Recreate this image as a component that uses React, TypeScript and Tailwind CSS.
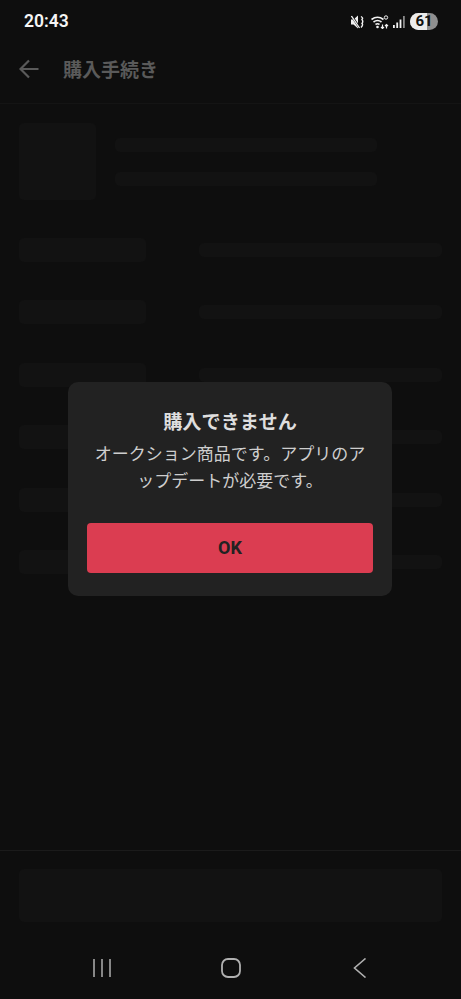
const jp = { fontFamily: '"Noto Sans CJK JP", Roboto, sans-serif' };

function StatusIcons() {
  return (
    <div className="flex items-center">
      {/* muted speaker */}
      <svg width="13" height="14" viewBox="0 0 13 14" className="mr-[7px]">
        <path d="M0 4.500h2.500l4.500-4v13l-4.500-4h-2.500z" fill="#f2f2f2" />
        <path d="M0.500 0.500l8.500 13" stroke="#0e0e0e" strokeWidth="2.200" />
        <path d="M0.500 1l8 12" stroke="#f2f2f2" strokeWidth="1.300" />
        <path d="M10 1.500q2.500 1.500 1 3q1.500 2 0 4q1.500 1.500-1 4" stroke="#f2f2f2" strokeWidth="1.400" fill="none" />
      </svg>
      {/* wifi */}
      <svg width="18" height="14" viewBox="0 0 18 14" className="mr-[4px]">
        <path d="M0.500 4.500q6-4.500 12 0M2.500 7q4-3 8 0M4.500 9.500q2-1.500 4 0" stroke="#f2f2f2" strokeWidth="1.600" fill="none" />
        <circle cx="6.500" cy="12" r="1.300" fill="#f2f2f2" />
        <path d="M11.500 9.500v4M10 12l1.500 1.500 1.500-1.500M15.500 13.500v-4M14 11l1.500-1.500 1.500 1.500" stroke="#f2f2f2" strokeWidth="1.200" fill="none" />
        <circle cx="15" cy="2.500" r="1.700" stroke="#f2f2f2" strokeWidth="1" fill="none" />
      </svg>
      {/* signal */}
      <svg width="12" height="12" viewBox="0 0 12 12" className="mr-[5px]">
        <rect x="0" y="9" width="1.800" height="3" fill="#f2f2f2" />
        <rect x="3.300" y="6.500" width="1.800" height="5.500" fill="#f2f2f2" />
        <rect x="6.600" y="3.500" width="1.800" height="8.500" fill="#f2f2f2" />
        <rect x="10" y="0" width="1.800" height="12" fill="#8a8a8a" />
      </svg>
      {/* battery */}
      <div className="relative flex h-[17px] w-[28px] items-center justify-center overflow-hidden rounded-full bg-[#8f8f8f]">
        <div className="absolute inset-y-0 left-0 w-[17px] bg-[#ececec]" />
        <span className="relative text-[15px] leading-none font-bold text-[#111]" style={{ fontFamily: "Roboto, sans-serif" }}>61</span>
      </div>
    </div>
  );
}

function Row() {
  return (
    <div className="flex h-[24px] items-center justify-between">
      <div className="h-[24px] w-[127px] rounded-[5px] bg-[#121212]" />
      <div className="h-[14px] w-[243px] rounded-[5px] bg-[#121212]" />
    </div>
  );
}

export default function App() {
  return (
    <div className="relative flex h-[999px] w-[461px] flex-col overflow-hidden bg-[#0e0e0e]" style={jp}>
      {/* Status bar */}
      <div className="flex h-[43px] items-center justify-between pr-[23px] pl-[24px]">
        <span className="pt-[1px] text-[17.500px] leading-none font-semibold text-[#f5f5f5]" style={{ fontFamily: "Roboto, sans-serif" }}>20:43</span>
        <StatusIcons />
      </div>

      {/* Header */}
      <div className="flex h-[61px] items-center border-b border-[#141414] pb-[9px] pl-[19px]">
        <svg width="20" height="20" viewBox="0 0 20 20" fill="none" stroke="#5a5a5a" strokeWidth="2.200">
          <path d="M19.500 10H1.500M10 1.500L1.500 10l8.500 8.500" />
        </svg>
        <span className="ml-[24px] text-[19px] leading-none font-bold text-[#5a5a5a]">購入手続き</span>
      </div>

      {/* Skeleton content */}
      <div className="flex flex-1 flex-col px-[19px] pt-[19px]">
        <div className="flex items-center">
          <div className="h-[77px] w-[77px] rounded-[5px] bg-[#121212]" />
          <div className="ml-[19px] flex flex-col gap-[20px]">
            <div className="h-[14px] w-[262px] rounded-[5px] bg-[#121212]" />
            <div className="h-[14px] w-[262px] rounded-[5px] bg-[#121212]" />
          </div>
        </div>
        <div className="mt-[38px] flex flex-col gap-[38.400px]">
          <Row />
          <Row />
          <Row />
          <Row />
          <Row />
          <Row />
        </div>
      </div>

      {/* Footer */}
      <div className="border-t border-[#1b1b1b] px-[19px] pt-[18px]">
        <div className="h-[53px] rounded-[5px] bg-[#121212]" />
      </div>

      {/* Nav bar */}
      <div className="flex h-[77px] items-center pt-[15px] pl-[92px]">
        <svg width="20" height="18" viewBox="0 0 20 18" stroke="#b0b0b0" strokeWidth="1.500">
          <path d="M2 0v18M10 0v18M18 0v18" />
        </svg>
        <svg width="20" height="20" viewBox="0 0 20 20" fill="none" stroke="#b0b0b0" strokeWidth="1.800" className="ml-[108.500px]">
          <rect x="1" y="1" width="18" height="18" rx="6" />
        </svg>
        <svg width="14" height="20" viewBox="0 0 14 20" fill="none" stroke="#b0b0b0" strokeWidth="1.600" className="ml-[112px]">
          <path d="M12.500 0.500L1.500 10l11 9.500" />
        </svg>
      </div>

      {/* Dialog */}
      <div className="absolute top-[382px] left-[68px] flex h-[214px] w-[324px] flex-col items-center rounded-[10px] bg-[#222222] px-[19px] pt-[25px]">
        <div className="text-[19.200px] leading-[28px] font-bold text-[#dedede]">購入できません</div>
        <p className="mt-[4px] w-[280px] text-center text-[17px] leading-[27px] text-[#cecece]">オークション商品です。アプリのアップデートが必要です。</p>
        <button className="mt-[30px] h-[50px] w-full rounded-[4px] bg-[#db3d51] pb-[2px] text-[18px] font-bold text-[#222]" style={{ fontFamily: "Roboto, sans-serif" }}>OK</button>
      </div>
    </div>
  );
}
